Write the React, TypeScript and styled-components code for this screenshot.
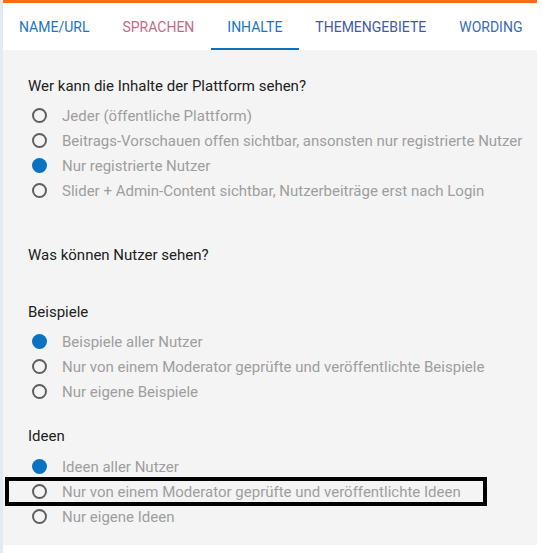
import React from "react";
import styled, { createGlobalStyle } from "styled-components";

const Global = createGlobalStyle`
  html, body { margin: 0; padding: 0; background: #ffffff; }
  body { font-family: Roboto, "Noto Sans", Arial, sans-serif; }
`;

const Page = styled.div`
  min-height: 553px;
  border-left: 3px solid #e4eaf2;
  box-sizing: border-box;
`;

const Panel = styled.div`
  width: 534px;
  border-top: 3px solid #fb6a18;
  box-sizing: border-box;
`;

const TabBar = styled.div`
  display: flex;
  height: 47px;
  margin-left: -0.5px;
  background: #ffffff;
`;

const Tab = styled.div<{ $color: string; $active?: boolean }>`
  display: flex;
  align-items: center;
  padding: 2px 16.5px 0;
  font-size: 14px;
  text-transform: uppercase;
  color: ${(p) => p.$color};
  border-bottom: 2px solid ${(p) => (p.$active ? "#0a72c1" : "transparent")};
  white-space: nowrap;
`;

const Content = styled.div`
  background: #f4f4f4;
  padding: 26px 0 16px 25px;
  display: flex;
  flex-direction: column;
`;

const Label = styled.div<{ $mt?: number; $mb?: number }>`
  font-size: 15px;
  line-height: 20px;
  color: #212121;
  margin-top: ${(p) => p.$mt ?? 0}px;
  margin-bottom: ${(p) => p.$mb ?? 7}px;
`;

const Row = styled.div<{ $highlight?: boolean }>`
  position: relative;
  display: flex;
  align-items: center;
  height: 25px;
  font-size: 15px;
  color: #9e9e9e;
  ${(p) =>
    p.$highlight
      ? `&::after {
          content: "";
          position: absolute;
          left: -23px;
          width: 482px;
          top: -2px;
          bottom: -2px;
          border: 4px solid #000;
          box-sizing: border-box;
        }`
      : ""}
`;

const Radio = styled.span<{ $checked?: boolean }>`
  box-sizing: border-box;
  width: 15px;
  height: 15px;
  border-radius: 50%;
  margin-left: 4px;
  margin-right: 15px;
  flex-shrink: 0;
  ${(p) =>
    p.$checked
      ? "background: #0a72c1;"
      : "border: 2px solid #5f5f5f; background: transparent;"}
`;

type Opt = { text: string; checked?: boolean; highlight?: boolean };

const Group = ({ options }: { options: Opt[] }) => (
  <>
    {options.map((o) => (
      <Row key={o.text} $highlight={o.highlight}>
        <Radio $checked={o.checked} />
        {o.text}
      </Row>
    ))}
  </>
);

export default function App() {
  return (
    <>
      <Global />
      <Page>
        <Panel>
          <TabBar>
            <Tab $color="#1a74c6">Name/URL</Tab>
            <Tab $color="#c46a86">Sprachen</Tab>
            <Tab $color="#1a74c6" $active>
              Inhalte
            </Tab>
            <Tab $color="#3f5aa6">Themengebiete</Tab>
            <Tab $color="#3a6cb6">Wording</Tab>
          </TabBar>
          <Content>
            <Label>Wer kann die Inhalte der Plattform sehen?</Label>
            <Group
              options={[
                { text: "Jeder (öffentliche Plattform)" },
                {
                  text: "Beitrags-Vorschauen offen sichtbar, ansonsten nur registrierte Nutzer",
                },
                { text: "Nur registrierte Nutzer", checked: true },
                {
                  text: "Slider + Admin-Content sichtbar, Nutzerbeiträge erst nach Login",
                },
              ]}
            />
            <Label $mt={42} $mb={37}>
              Was können Nutzer sehen?
            </Label>
            <Label>Beispiele</Label>
            <Group
              options={[
                { text: "Beispiele aller Nutzer", checked: true },
                {
                  text: "Nur von einem Moderator geprüfte und veröffentlichte Beispiele",
                },
                { text: "Nur eigene Beispiele" },
              ]}
            />
            <Label $mt={22} $mb={8}>
              Ideen
            </Label>
            <Group
              options={[
                { text: "Ideen aller Nutzer", checked: true },
                {
                  text: "Nur von einem Moderator geprüfte und veröffentlichte Ideen",
                  highlight: true,
                },
                { text: "Nur eigene Ideen" },
              ]}
            />
          </Content>
        </Panel>
      </Page>
    </>
  );
}
